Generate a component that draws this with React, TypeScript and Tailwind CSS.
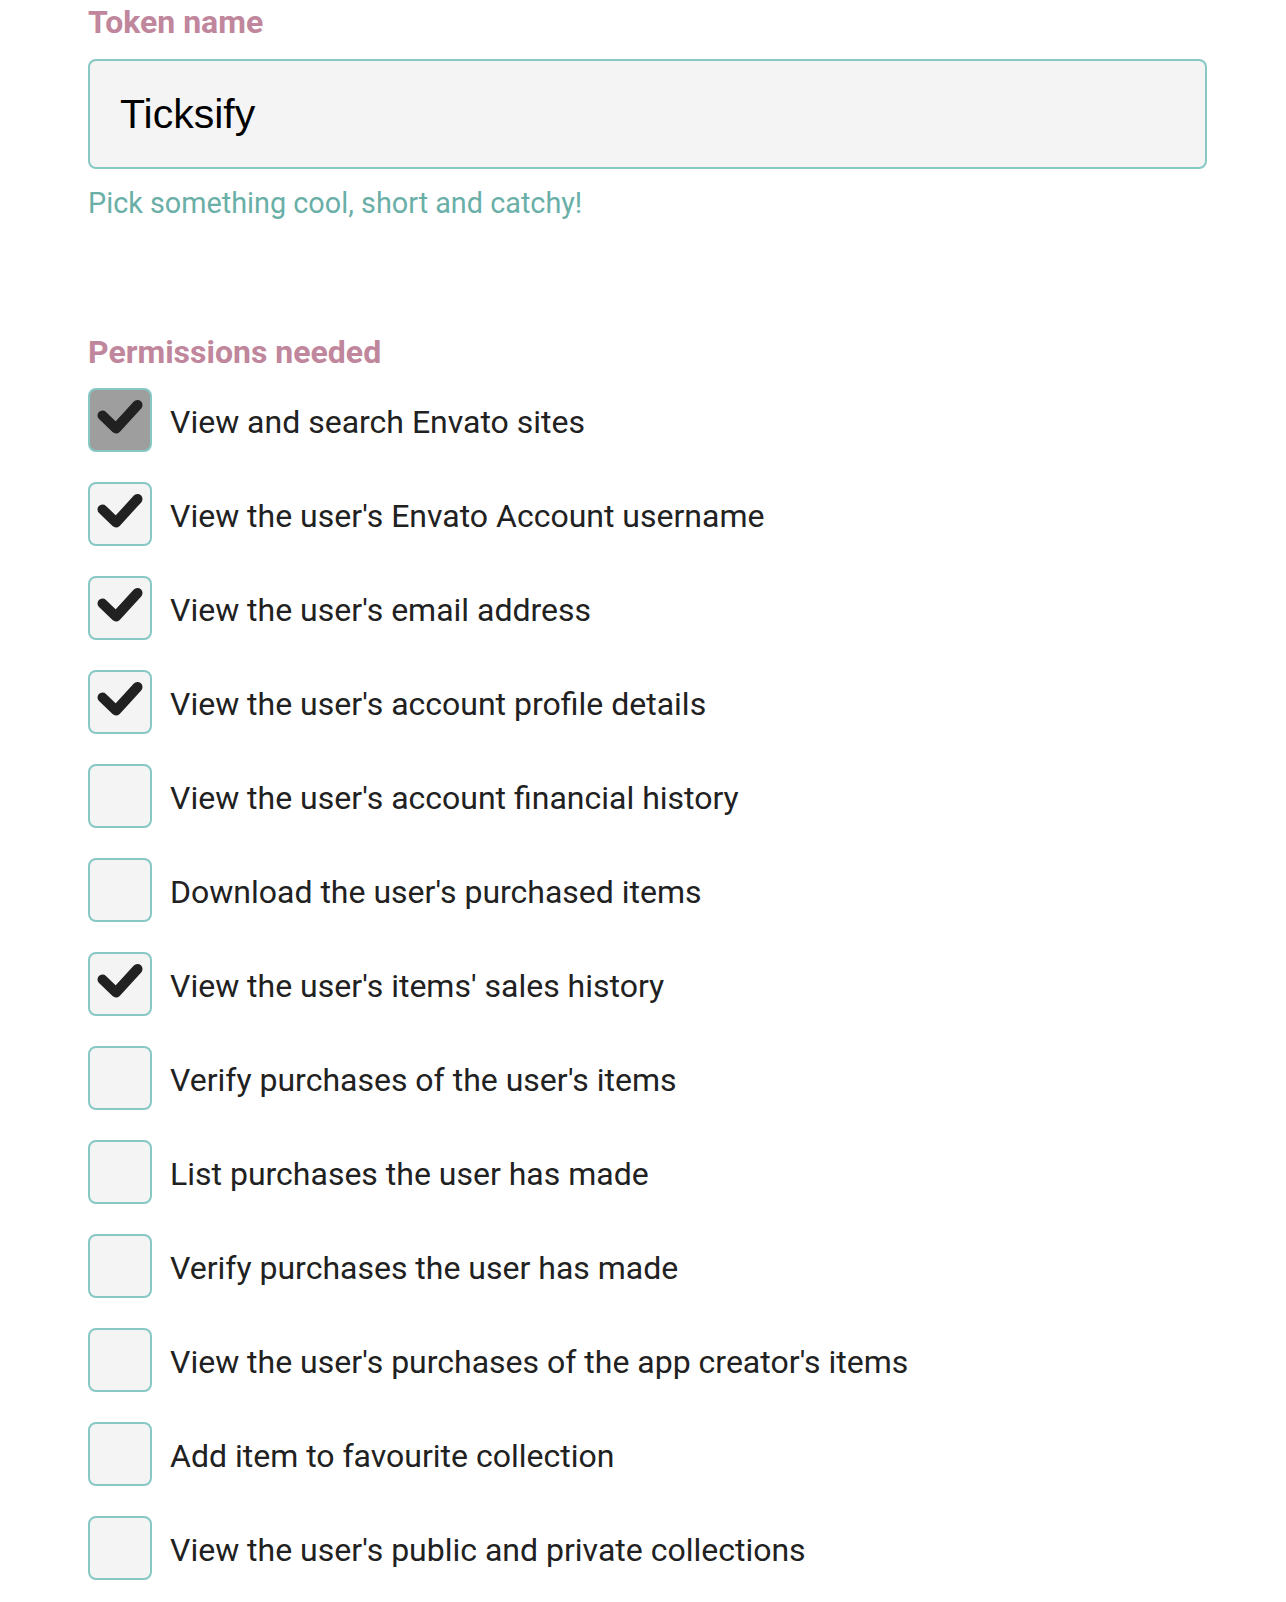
const permissions = [
  { label: "View and search Envato sites", checked: true, locked: true },
  { label: "View the user's Envato Account username", checked: true },
  { label: "View the user's email address", checked: true },
  { label: "View the user's account profile details", checked: true },
  { label: "View the user's account financial history", checked: false },
  { label: "Download the user's purchased items", checked: false },
  { label: "View the user's items' sales history", checked: true },
  { label: "Verify purchases of the user's items", checked: false },
  { label: "List purchases the user has made", checked: false },
  { label: "Verify purchases the user has made", checked: false },
  { label: "View the user's purchases of the app creator's items", checked: false },
  { label: "Add item to favourite collection", checked: false },
  { label: "View the user's public and private collections", checked: false },
];

const CheckMark = () => (
  <svg viewBox="0 0 60 60" className="h-full w-full">
    <polyline
      points="12.5,25.5 26,38.5 47.5,15"
      fill="none"
      stroke="#212121"
      strokeWidth="10"
      strokeLinecap="round"
      strokeLinejoin="round"
    />
  </svg>
);

type RowProps = { label: string; checked: boolean; locked?: boolean };

const PermissionRow = ({ label, checked, locked }: RowProps) => (
  <label className="flex h-16 items-center gap-[18px]">
    <span
      className={`h-16 w-16 shrink-0 rounded-lg border-2 border-[#86c8c4] ${
        locked ? "bg-[#9e9e9e]" : "bg-[#f4f4f4]"
      }`}
    >
      {checked && <CheckMark />}
    </span>
    <span className="pt-[4px] text-[32px] leading-none text-[#212121]">{label}</span>
  </label>
);

export default function App() {
  return (
    <div className="min-h-screen bg-white pl-[88px] pr-[79px] font-['Roboto','Liberation_Sans',sans-serif]">
      <h2 className="pt-[4px] text-[32px] font-bold leading-[36px] text-[#c0869c]">Token name</h2>
      <div className="mt-[19px] flex h-[110px] items-center rounded-lg border-2 border-[#86c8c4] bg-[#f4f4f4] pl-[30px]">
        <span className="font-['Liberation_Sans',Arial,sans-serif] text-[41px] leading-none text-black">
          Ticksify
        </span>
      </div>
      <p className="mt-[17px] text-[28.8px] leading-[34px] text-[#6aafa7]">
        Pick something cool, short and catchy!
      </p>

      <h2 className="mt-[114px] text-[32px] font-bold leading-[36px] text-[#c0869c]">
        Permissions needed
      </h2>
      <div className="mt-[18px] flex flex-col gap-[30px]">
        {permissions.map((p) => (
          <PermissionRow key={p.label} {...p} />
        ))}
      </div>
    </div>
  );
}
